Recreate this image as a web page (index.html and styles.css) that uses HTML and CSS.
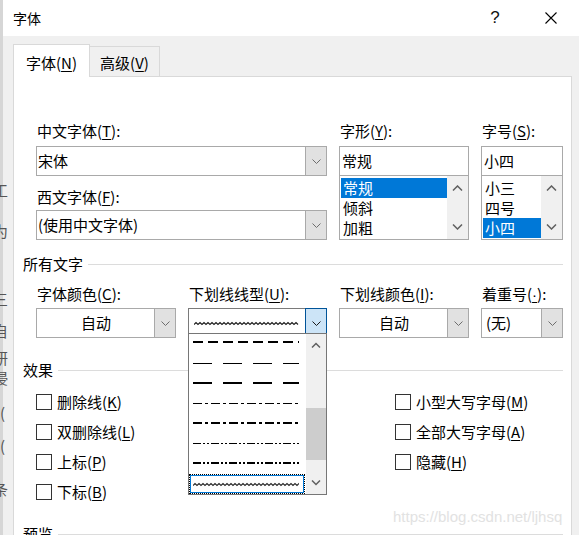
FILE: index.html
```html
<!DOCTYPE html>
<html lang="zh-CN">
<head>
<meta charset="utf-8">
<title>字体</title>
<link rel="stylesheet" href="styles.css">
</head>
<body>
<div class="window">
  <header class="titlebar">
    <span class="title">字体</span>
    <span class="tb-btn help">?</span>
    <span class="tb-btn close"><svg width="12" height="12" viewBox="0 0 12 12"><path d="M0.5 0.5L11.5 11.5M11.5 0.5L0.5 11.5" stroke="#000" stroke-width="1.1" fill="none"/></svg></span>
  </header>
  <div class="body">
    <div class="gutter">
      <div class="frag f1">工</div>
      <div class="frag f2">为</div>
      <div class="frag f3">三</div>
      <div class="frag f4">自</div>
      <div class="frag f5">研</div>
      <div class="frag f6">浸</div>
      <div class="frag f7">(</div>
      <div class="frag f8">(</div>
      <div class="frag f9">条</div>
    </div>
    <div class="tabctl">
      <div class="tabs">
        <div class="tab active">字体(<u>N</u>)</div>
        <div class="tab">高级(<u>V</u>)</div>
      </div>
      <div class="page">
        <div class="font-row">
          <div class="col-name">
            <div class="lbl">中文字体(<u>T</u>):</div>
            <div class="combo first">
              <span class="val">宋体</span>
              <span class="btn"><svg width="9" height="5" viewBox="0 0 9 5"><path d="M0.5 0.5L4.5 4.5L8.5 0.5" fill="none" stroke="#6d6d6d"/></svg></span>
            </div>
            <div class="lbl second">西文字体(<u>F</u>):</div>
            <div class="combo second">
              <span class="val">(使用中文字体)</span>
              <span class="btn"><svg width="9" height="5" viewBox="0 0 9 5"><path d="M0.5 0.5L4.5 4.5L8.5 0.5" fill="none" stroke="#6d6d6d"/></svg></span>
            </div>
          </div>
          <div class="col-style">
            <div class="lbl">字形(<u>Y</u>):</div>
            <div class="textbox">常规</div>
            <div class="listbox">
              <div class="items">
                <div class="item sel">常规</div>
                <div class="item">倾斜</div>
                <div class="item">加粗</div>
              </div>
              <div class="vscroll">
                <span class="arrow"><svg width="11" height="6" viewBox="0 0 11 6"><path d="M1 5.5L5.5 1L10 5.5" fill="none" stroke="#606060" stroke-width="1.5"/></svg></span>
                <span class="arrow"><svg width="11" height="6" viewBox="0 0 11 6"><path d="M1 0.5L5.5 5L10 0.5" fill="none" stroke="#606060" stroke-width="1.5"/></svg></span>
              </div>
            </div>
          </div>
          <div class="col-size">
            <div class="lbl">字号(<u>S</u>):</div>
            <div class="textbox">小四</div>
            <div class="listbox">
              <div class="items">
                <div class="item">小三</div>
                <div class="item">四号</div>
                <div class="item sel">小四</div>
              </div>
              <div class="vscroll">
                <span class="arrow"><svg width="11" height="6" viewBox="0 0 11 6"><path d="M1 5.5L5.5 1L10 5.5" fill="none" stroke="#606060" stroke-width="1.5"/></svg></span>
                <span class="arrow"><svg width="11" height="6" viewBox="0 0 11 6"><path d="M1 0.5L5.5 5L10 0.5" fill="none" stroke="#606060" stroke-width="1.5"/></svg></span>
              </div>
            </div>
          </div>
        </div>

        <div class="group all"><span>所有文字</span></div>

        <div class="row2">
          <div class="c-color">
            <div class="lbl">字体颜色(<u>C</u>):</div>
            <div class="combo">
              <span class="val center">自动</span>
              <span class="btn"><svg width="9" height="5" viewBox="0 0 9 5"><path d="M0.5 0.5L4.5 4.5L8.5 0.5" fill="none" stroke="#6d6d6d"/></svg></span>
            </div>
          </div>
          <div class="c-uline">
            <div class="lbl">下划线线型(<u>U</u>):</div>
            <div class="combo focus">
              <span class="val wave"><svg width="106" height="20" viewBox="0 0 106 20"><path d="M0 11.5l2-2 2 2 2-2 2 2 2-2 2 2 2-2 2 2 2-2 2 2 2-2 2 2 2-2 2 2 2-2 2 2 2-2 2 2 2-2 2 2 2-2 2 2 2-2 2 2 2-2 2 2 2-2 2 2 2-2 2 2 2-2 2 2 2-2 2 2 2-2 2 2 2-2 2 2 2-2 2 2 2-2 2 2 2-2 2 2 2-2 2 2 2-2 2 2 2-2 2 2 2-2 2 2" fill="none" stroke="#1e1e1e" stroke-width="1.1"/></svg></span>
              <span class="btn hot"><svg width="9" height="5" viewBox="0 0 9 5"><path d="M0.5 0.5L4.5 4.5L8.5 0.5" fill="none" stroke="#1a1a1a"/></svg></span>
            </div>
          </div>
          <div class="c-ucolor">
            <div class="lbl">下划线颜色(<u>I</u>):</div>
            <div class="combo">
              <span class="val center">自动</span>
              <span class="btn"><svg width="9" height="5" viewBox="0 0 9 5"><path d="M0.5 0.5L4.5 4.5L8.5 0.5" fill="none" stroke="#6d6d6d"/></svg></span>
            </div>
          </div>
          <div class="c-emph">
            <div class="lbl">着重号(<u class="dot">·</u>):</div>
            <div class="combo">
              <span class="val pad">(无)</span>
              <span class="btn"><svg width="9" height="5" viewBox="0 0 9 5"><path d="M0.5 0.5L4.5 4.5L8.5 0.5" fill="none" stroke="#6d6d6d"/></svg></span>
            </div>
          </div>
        </div>

        <div class="group fx"><span>效果</span></div>

        <div class="effects">
          <div class="eff-col left">
            <div class="check"><span class="box"></span><span>删除线(<u>K</u>)</span></div>
            <div class="check"><span class="box"></span><span>双删除线(<u>L</u>)</span></div>
            <div class="check"><span class="box"></span><span>上标(<u>P</u>)</span></div>
            <div class="check"><span class="box"></span><span>下标(<u>B</u>)</span></div>
          </div>
          <div class="eff-col">
            <div class="check"><span class="box"></span><span>小型大写字母(<u>M</u>)</span></div>
            <div class="check"><span class="box"></span><span>全部大写字母(<u>A</u>)</span></div>
            <div class="check"><span class="box"></span><span>隐藏(<u>H</u>)</span></div>
          </div>
        </div>

        <div class="group preview"><span>预览</span></div>

        <div class="dropdown">
          <div class="dd-items">
            <div class="dd-item"><svg width="106" height="20"><line x1="0" y1="8" x2="106" y2="8" stroke="#000" stroke-width="2" stroke-dasharray="10 5"/></svg></div>
            <div class="dd-item"><svg width="106" height="20"><line x1="0" y1="9.5" x2="106" y2="9.5" stroke="#000" stroke-width="1" stroke-dasharray="19 11"/></svg></div>
            <div class="dd-item"><svg width="106" height="20"><line x1="0" y1="9" x2="106" y2="9" stroke="#000" stroke-width="2" stroke-dasharray="19 11"/></svg></div>
            <div class="dd-item"><svg width="106" height="20"><line x1="0" y1="9.5" x2="106" y2="9.5" stroke="#000" stroke-width="1" stroke-dasharray="9 3 3 3"/></svg></div>
            <div class="dd-item"><svg width="106" height="20"><line x1="0" y1="9" x2="106" y2="9" stroke="#000" stroke-width="2" stroke-dasharray="9 3 3 3"/></svg></div>
            <div class="dd-item"><svg width="106" height="20"><line x1="0" y1="9.5" x2="106" y2="9.5" stroke="#000" stroke-width="1" stroke-dasharray="8 2 2 2 2 2"/></svg></div>
            <div class="dd-item"><svg width="106" height="20"><line x1="0" y1="9" x2="106" y2="9" stroke="#000" stroke-width="2" stroke-dasharray="8 2 2 2 2 2"/></svg></div>
            <div class="dd-item sel"><svg width="106" height="18"><path d="M0 10.5l2-2 2 2 2-2 2 2 2-2 2 2 2-2 2 2 2-2 2 2 2-2 2 2 2-2 2 2 2-2 2 2 2-2 2 2 2-2 2 2 2-2 2 2 2-2 2 2 2-2 2 2 2-2 2 2 2-2 2 2 2-2 2 2 2-2 2 2 2-2 2 2 2-2 2 2 2-2 2 2 2-2 2 2 2-2 2 2 2-2 2 2 2-2 2 2 2-2 2 2 2-2 2 2 2-2 2 2" fill="none" stroke="#2a2a2a" stroke-width="1.1"/></svg></div>
          </div>
          <div class="dd-scroll">
            <span class="arrow"><svg width="10" height="6" viewBox="0 0 10 6"><path d="M1 5.5L5 1.5L9 5.5" fill="none" stroke="#606060" stroke-width="1.5"/></svg></span>
            <div class="dd-track"><div class="dd-thumb"></div></div>
            <span class="arrow"><svg width="10" height="6" viewBox="0 0 10 6"><path d="M1 0.5L5 4.5L9 0.5" fill="none" stroke="#606060" stroke-width="1.5"/></svg></span>
          </div>
        </div>
      </div>
    </div>
    <div class="rgutter"></div>
  </div>
  <div class="watermark">https://blog.csdn.net/ljhsq</div>
</div>
</body>
</html>
```

FILE: styles.css
```css
* { box-sizing: border-box; }
html, body { margin: 0; padding: 0; }
body {
  width: 579px;
  height: 535px;
  overflow: hidden;
  background: #f0f0f0;
  font-family: "Noto Sans CJK SC", "Noto Sans", sans-serif;
  font-size: 15px;
  line-height: 20px;
  color: #000;
}
u { text-decoration: underline; text-underline-offset: 2px; }
u.dot { font-family: "Liberation Sans", sans-serif; }

.window {
  position: relative;
  width: 579px;
  height: 535px;
  display: flex;
  flex-direction: column;
}

.titlebar {
  height: 36px;
  flex: none;
  display: flex;
  align-items: center;
  background: #fff;
  border-left: 3px solid #d6d6d6;
}
.title { flex: 1; padding-left: 10px; font-size: 14px; }
.tb-btn {
  width: 56px;
  height: 36px;
  display: flex;
  align-items: center;
  justify-content: center;
}
.help { font-family: "Liberation Sans", sans-serif; font-size: 17px; color: #111; }

.body { flex: 1; display: flex; min-height: 0; }

.gutter {
  width: 13px;
  flex: none;
  overflow: hidden;
  color: #555;
  background: linear-gradient(to right, #d6d6d6 0, #d6d6d6 3px, #f0f0f0 3px);
}
.frag { height: 20px; margin-left: -7px; white-space: nowrap; }
.f1 { margin-top: 144px; }
.f2 { margin-top: 21px; }
.f3 { margin-top: 48px; }
.f4 { margin-top: 12px; }
.f5 { margin-top: 7px; }
.f6 { margin-top: 0; }
.f7 { margin-top: 15px; margin-left: 0; }
.f8 { margin-top: 13px; margin-left: 0; }
.f9 { margin-top: 23px; }

.tabctl { width: 559px; flex: none; display: flex; flex-direction: column; }
.rgutter { flex: 1; }

.tabs { height: 40px; flex: none; display: flex; align-items: flex-end; }
.tab {
  width: 71px;
  height: 30px;
  margin-left: -1px;
  border: 1px solid #d9d9d9;
  border-bottom: 0;
  background: #f0f0f0;
  text-align: center;
  padding-top: 6px;
  white-space: nowrap;
}
.tab.active {
  position: relative;
  z-index: 1;
  width: 77px;
  height: 33px;
  margin: 0 0 -1px 0;
  background: #fff;
  padding-top: 8px;
}

.page {
  position: relative;
  flex: 1;
  min-height: 0;
  overflow: hidden;
  background: #fff;
  border: 1px solid #d9d9d9;
  border-bottom: 0;
  padding: 44px 8px 0 22px;
}

.lbl { height: 20px; padding-left: 1px; white-space: nowrap; }

.font-row { display: flex; gap: 12px; }
.col-name { width: 291px; }
.col-style { width: 130px; }
.col-size { width: 82px; }

.combo {
  display: flex;
  height: 30px;
  margin-top: 5px;
  border: 1px solid #a9a9a9;
  background: #fff;
}
.combo .val {
  flex: 1;
  padding-left: 1px;
  line-height: 28px;
  white-space: nowrap;
  overflow: hidden;
}
.combo .val.center { text-align: center; }
.combo .val.pad { padding-left: 4px; }
.combo .val.wave { display: flex; align-items: center; padding-left: 5px; }
.combo .btn {
  width: 21px;
  flex: none;
  border-left: 1px solid #a9a9a9;
  background: #e1e1e1;
  display: flex;
  align-items: center;
  justify-content: center;
}
.lbl.second { margin-top: 11px; }
.combo.second { margin-top: 3px; }
.combo.focus { border-color: #7a7a7a; }
.combo .btn.hot {
  width: 22px;
  margin: -1px -1px -1px 0;
  border: 1px solid #005499;
  background: #cce4f7;
}

.textbox {
  height: 30px;
  margin-top: 5px;
  border: 1px solid #a9a9a9;
  padding-left: 2px;
  line-height: 28px;
  white-space: nowrap;
}
.listbox {
  height: 65px;
  margin-top: -1px;
  border: 1px solid #a9a9a9;
  display: flex;
  background: #fff;
}
.listbox .items { flex: 1; padding: 2px 0 0 1px; }
.listbox .item { height: 20px; padding-left: 2px; white-space: nowrap; }
.item.sel { background: #0078d7; color: #fff; }
.vscroll {
  width: 21px;
  flex: none;
  background: #f0f0f0;
  display: flex;
  flex-direction: column;
  justify-content: space-between;
}
.arrow { height: 24px; display: flex; align-items: center; justify-content: center; }

.group {
  display: flex;
  align-items: center;
  height: 20px;
  margin-left: -13px;
  white-space: nowrap;
}
.group::after {
  content: "";
  flex: 1;
  height: 1px;
  margin-left: 5px;
  background: #dcdcdc;
}
.group.all { margin-top: 14px; }
.group.fx { margin-top: 22px; }
.group.preview { margin-top: 22px; }

.row2 { display: flex; gap: 12px; margin-top: 10px; }
.row2 .combo { margin-top: 4px; }
.c-color { width: 140px; }
.c-uline { width: 139px; }
.c-ucolor { width: 130px; }
.c-emph { width: 82px; }

.effects { display: flex; margin-top: 12px; }
.eff-col { display: flex; flex-direction: column; gap: 10px; }
.eff-col.left { width: 359px; }
.check { display: flex; align-items: center; gap: 5px; height: 20px; white-space: nowrap; }
.box { width: 16px; height: 16px; flex: none; border: 1px solid #333; background: #fff; }

.dropdown {
  position: absolute;
  left: 174px;
  top: 256px;
  width: 139px;
  height: 162px;
  z-index: 2;
  display: flex;
  background: #fff;
  border: 1px solid #767676;
}
.dd-items { flex: 1; }
.dd-item { height: 20px; padding-left: 4px; }
.dd-item svg { display: block; }
.dd-item.sel {
  margin-right: 1px;
  padding-left: 3px;
  border: 1px dotted #000;
  box-shadow: inset 0 0 0 1px #0078d7;
}
.dd-scroll {
  width: 20px;
  flex: none;
  background: #f0f0f0;
  display: flex;
  flex-direction: column;
}
.dd-scroll .arrow { height: 22px; }
.dd-track { flex: 1; }
.dd-thumb { height: 52px; margin-top: 52px; background: #cdcdcd; }

.watermark {
  position: absolute;
  left: 393px;
  top: 507px;
  color: #e2e2e2;
  font-family: "Liberation Sans", sans-serif;
  font-size: 15px;
  line-height: 20px;
  white-space: nowrap;
}
```
